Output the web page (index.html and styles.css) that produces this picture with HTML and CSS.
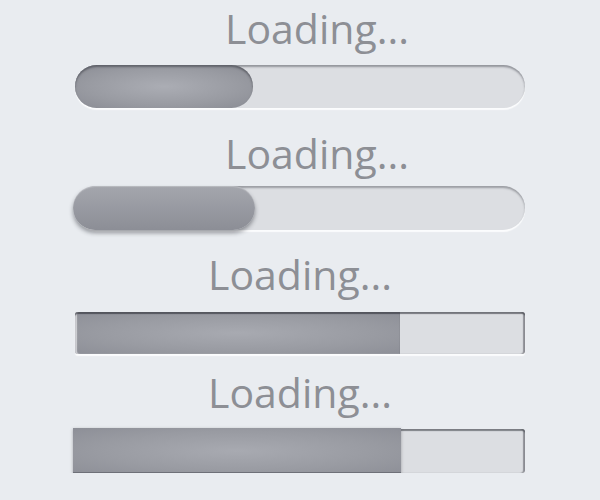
FILE: index.html
```html
<!DOCTYPE html>
<html lang="en">
<head>
    <meta charset="UTF-8">
    <title>Loading Bars</title>
    <link rel="stylesheet" href="styles.css">
</head>
<body>
    <div class="loader-stack">
        <div class="loader loader-pill-inset">
            <div class="loader-label shifted">Loading...</div>
            <div class="track"><div class="fill" style="width: 178px"></div></div>
        </div>
        <div class="loader loader-pill-raised">
            <div class="loader-label shifted">Loading...</div>
            <div class="track"><div class="fill" style="width: 182px"></div></div>
        </div>
        <div class="loader loader-box-inset">
            <div class="loader-label">Loading...</div>
            <div class="track"><div class="fill" style="width: 325px"></div></div>
        </div>
        <div class="loader loader-box-raised">
            <div class="loader-label">Loading...</div>
            <div class="track"><div class="fill" style="width: 328px"></div></div>
        </div>
    </div>
</body>
</html>
```

FILE: styles.css
```css
body {
    margin: 0;
    background: #e9ecf0;
    font-family: "Open Sans", "DejaVu Sans", sans-serif;
}
.loader-stack {
    display: flex;
    flex-direction: column;
    align-items: center;
}
.loader {
    display: flex;
    flex-direction: column;
    align-items: center;
}
.loader-label {
    font-size: 41px;
    line-height: 56px;
    color: #8d8f95;
}
.loader-label.shifted {
    padding-left: 34px;
}
.track {
    width: 450px;
    background: #dcdee2;
    display: flex;
}
.fill {
    height: 100%;
}

/* rounded, sunk into the page */
.loader-pill-inset .loader-label { margin-bottom: 9px; }
.loader-pill-inset .track {
    height: 43px;
    border-radius: 22px;
    box-shadow: inset 0 2px 2px rgba(60, 62, 70, 0.45), 0 2px 1px #fbfcfd;
}
.loader-pill-inset .fill {
    border-radius: 22px;
    background: radial-gradient(ellipse at center, #abadb4 0%, #999ba2 60%, #8a8c94 100%);
    box-shadow: inset 0 2px 2px rgba(50, 52, 60, 0.5);
}

/* rounded, fill lifted off the track */
.loader-pill-raised { margin-top: 17px; }
.loader-pill-raised .loader-label { margin-bottom: 5px; }
.loader-pill-raised .track {
    height: 44px;
    border-radius: 22px;
    box-shadow: inset 0 2px 2px rgba(60, 62, 70, 0.4), 0 2px 1px #fbfcfd;
}
.loader-pill-raised .fill {
    margin-left: -2px;
    border-radius: 22px;
    background: linear-gradient(#a4a6ad, #8c8e96);
    box-shadow: 0 3px 4px rgba(40, 42, 50, 0.45), inset 0 1px 1px rgba(255, 255, 255, 0.25);
}

/* square, sunk into the page */
.loader-box-inset { margin-top: 16px; }
.loader-box-inset .loader-label { margin-bottom: 10px; }
.loader-box-inset .track {
    height: 42px;
    border-radius: 3px;
    box-shadow: inset 0 2px 1px rgba(50, 52, 60, 0.6), inset -2px 0 1px rgba(50, 52, 60, 0.45), 0 2px 1px #fbfcfd;
}
.loader-box-inset .fill {
    border-radius: 3px 0 0 3px;
    background: radial-gradient(ellipse at center, #a8aab1 0%, #999ba2 60%, #8d8f97 100%);
    box-shadow: inset 0 2px 1px rgba(40, 42, 50, 0.6), inset 2px 0 1px rgba(250, 250, 252, 0.6);
}

/* square, fill lifted off the track */
.loader-box-raised { margin-top: 10px; }
.loader-box-raised .loader-label { margin-bottom: 9px; }
.loader-box-raised .track {
    height: 44px;
    border-radius: 3px;
    box-shadow: inset 0 2px 1px rgba(50, 52, 60, 0.55), inset -2px 0 1px rgba(50, 52, 60, 0.45);
}
.loader-box-raised .fill {
    height: 46px;
    margin: -1px 0 -1px -2px;
    background: radial-gradient(ellipse at center, #a8aab1 0%, #999ba2 60%, #8d8f97 100%);
    box-shadow: inset 0 -2px 0 #6e7078, 0 1px 3px rgba(40, 42, 50, 0.35);
}
```
